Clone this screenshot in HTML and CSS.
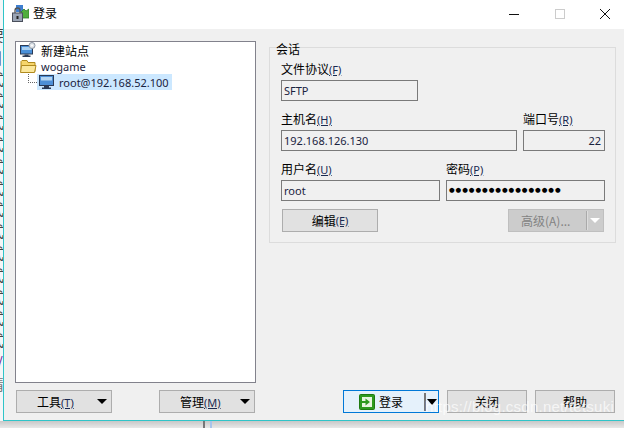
FILE: index.html
```html
<!DOCTYPE html>
<html lang="zh">
<head>
<meta charset="utf-8">
<title>登录</title>
<link rel="stylesheet" href="styles.css">
</head>
<body>
<div class="desktop">
  <div class="behind" aria-hidden="true">
    <span>要</span><span class="bracket">]</span><span>式</span><span>式</span><span>式</span><span>式</span><span>式</span><span>式</span><span>式</span><span>式</span><span>式</span><span>式</span><span>式</span><span>式</span><span>式</span><span class="purple">/</span><span class="grey">请</span>
  </div>
  <div class="window">
    <header class="titlebar">
      <svg class="app-icon" width="17" height="17" viewBox="0 0 17 17">
        <rect x="4" y="0" width="7" height="7" fill="#3f7fd0"/>
        <path d="M9 7l3-3 2 2 3-2v9H9z" fill="#4fae3c" stroke="#2e7d24" stroke-width=".8"/>
        <path d="M3 8V5.500a2.500 2.500 0 0 1 5 0V8" fill="none" stroke="#555" stroke-width="1.300"/>
        <rect x=".5" y="8" width="10" height="8.500" fill="#9aa4b4" stroke="#4a4f5c"/>
        <rect x="4.500" y="11" width="2" height="3" fill="#222"/>
      </svg>
      <span class="title">登录</span>
      <div class="controls">
        <span class="ctl"><svg width="12" height="12" viewBox="0 0 12 12"><path d="M1 6.500h10" stroke="#111"/></svg></span>
        <span class="ctl"><svg width="12" height="12" viewBox="0 0 12 12"><rect x="1.500" y="1.500" width="9" height="9" fill="none" stroke="#ccc"/></svg></span>
        <span class="ctl"><svg width="12" height="12" viewBox="0 0 12 12"><path d="M1 1l10 10M11 1L1 11" stroke="#111" fill="none"/></svg></span>
      </div>
    </header>
    <main class="content">
      <section class="left">
        <div class="tree">
          <div class="node">
            <svg width="18" height="16" viewBox="0 0 18 16">
              <rect x=".5" y="3.500" width="12" height="8.500" fill="#4a90d9" stroke="#2b3a55"/>
              <path d="M2 5h9.500v3H2z" fill="#a9d0f2"/>
              <path d="M4.500 12.500h4v1h2V15h-8v-1.500h2z" fill="#2b3a55"/>
              <circle cx="12" cy="3.500" r="3" fill="#dfe3e8" stroke="#8c96a3"/>
              <circle cx="12" cy="3.500" r="1" fill="#fff"/>
            </svg>
            <span class="cjk">新建站点</span>
          </div>
          <div class="node">
            <svg width="18" height="15" viewBox="0 0 18 15">
              <path d="M1 12.500v-10l1-1h5l1 2h7v9z" fill="#f6d56b" stroke="#b08a1e"/>
              <path d="M.5 13.500l1-7h14.500l-1.500 7z" fill="#fbe79b" stroke="#b08a1e"/>
            </svg>
            <span class="latin">wogame</span>
          </div>
          <div class="node child">
            <span class="dots"></span>
            <div class="selected">
              <svg width="16" height="15" viewBox="0 0 16 15">
                <rect x=".5" y=".5" width="14" height="10" fill="#4d8fd6" stroke="#2b3a55"/>
                <path d="M2 2h11v3.500H2z" fill="#b5d6f3"/>
                <path d="M5 11h5v1.500h2V14H3v-1.500h2z" fill="#2b3a55"/>
              </svg>
              <span class="latin">root@192.168.52.100</span>
            </div>
          </div>
        </div>
        <div class="left-actions">
          <button class="btn split"><span class="lbl">工具<u>(T)</u></span><i class="arrow"></i></button>
          <button class="btn split"><span class="lbl">管理<u>(M)</u></span><i class="arrow"></i></button>
        </div>
      </section>
      <section class="right">
        <fieldset class="session">
          <legend>会话</legend>
          <div class="field protocol">
            <label>文件协议<u>(F)</u></label>
            <div class="input">SFTP</div>
          </div>
          <div class="row host-row">
            <div class="field grow">
              <label>主机名<u>(H)</u></label>
              <div class="input">192.168.126.130</div>
            </div>
            <div class="field port">
              <label>端口号<u>(R)</u></label>
              <div class="input end">22</div>
            </div>
          </div>
          <div class="row user-row">
            <div class="field half">
              <label>用户名<u>(U)</u></label>
              <div class="input">root</div>
            </div>
            <div class="field half">
              <label>密码<u>(P)</u></label>
              <div class="input dots-text">●●●●●●●●●●●●●●●●●</div>
            </div>
          </div>
          <div class="row session-actions">
            <button class="btn">编辑<u>(E)</u></button>
            <button class="btn disabled"><span class="lbl">高级(A)...</span><span class="sep"></span><i class="arrow light"></i></button>
          </div>
        </fieldset>
        <div class="dialog-actions">
          <button class="btn primary">
            <span class="lbl">
              <svg width="16" height="16" viewBox="0 0 16 16">
                <rect x=".5" y=".5" width="15" height="15" rx="1" fill="#2f9a1e" stroke="#1e7a12"/>
                <rect x="3" y="3" width="10" height="10" fill="#e8f5e0"/>
                <path d="M3 7h3.500V4.500L11 8l-4.500 3.500V9H3z" fill="#2f9a1e"/>
              </svg>
              登录
            </span>
            <span class="sep dark"></span><i class="arrow big"></i>
          </button>
          <button class="btn small">关闭</button>
          <button class="btn small">帮助</button>
        </div>
      </section>
    </main>
  </div>
</div>
<div class="below"><i></i><i></i></div>
<div class="watermark">https://blog.csdn.net/tetsuki</div>
</body>
</html>
```

FILE: styles.css
```css
* { box-sizing: border-box; }
html, body { margin: 0; height: 100%; overflow: hidden; }
body {
  position: relative;
  width: 624px;
  height: 428px;
  background: #e8e8e8;
  font: 12px "Noto Sans CJK SC", "Noto Sans", sans-serif;
  color: #000;
}
u { text-decoration: underline; font-family: "Noto Sans", sans-serif; font-size: 11px; color: #1a2a50; }

.desktop { display: flex; height: 421px; }
.behind {
  width: 3px;
  flex: none;
  overflow: hidden;
  background: #f4f6f8;
  padding-top: 24px;
  display: flex;
  flex-direction: column;
  font-size: 15px;
  line-height: 21.800px;
  color: #444;
}
.behind span { display: block; margin-left: -11px; white-space: nowrap; }
.behind .bracket { margin-left: -3px; }
.behind .purple { color: #6a1b9a; margin-left: -3px; }
.behind .grey { color: #777; }

.window {
  flex: 1;
  display: flex;
  flex-direction: column;
  border-left: 1px solid #2fc4c8;
  border-bottom: 1px solid #2fc4c8;
  background: #f0f0f0;
  min-width: 0;
}
.titlebar {
  height: 29px;
  flex: none;
  background: #fff;
  display: flex;
  align-items: center;
  padding: 0 0 2px 8px;
}
.app-icon { margin-right: 4px; }
.title { font-size: 12px; margin-top: -3px; }
.controls { margin-left: auto; display: flex; gap: 7.500px; }
.ctl { width: 38px; display: flex; justify-content: center; }

.content { flex: 1; display: flex; min-height: 0; padding: 12px 8px 7px 11px; }
.left { width: 241px; flex: none; display: flex; flex-direction: column; }
.tree {
  height: 342px;
  background: #fff;
  border: 1px solid #82828c;
  padding: 0 0 0 4px;
}
.node { display: flex; align-items: center; height: 16px; gap: 3px; }
.latin { font-family: "Noto Sans", sans-serif; font-size: 11px; color: #1a2340; }
.child { padding-left: 8px; gap: 0; }
.dots { width: 9px; height: 9px; border-left: 1px dotted #666; border-bottom: 1px dotted #666; margin-top: -8px; }
.selected {
  flex: 1;
  display: flex;
  align-items: center;
  gap: 4px;
  height: 16px;
  background: #cce8ff;
  padding-left: 2px;
  margin-right: 83px;
}
.left-actions { display: flex; justify-content: space-between; margin-top: 7px; padding: 0 1px; }

.btn {
  width: 96px;
  height: 23px;
  padding: 0;
  border: 1px solid #adadad;
  background: #e1e1e1;
  font: inherit;
  color: #000;
  display: flex;
  align-items: center;
  justify-content: center;
}
.btn.split { justify-content: flex-start; }
.btn.split .lbl { margin-left: 20px; }
.btn.split .arrow { margin-left: auto; margin-right: 4px; }
.arrow { width: 0; height: 0; border-left: 5px solid transparent; border-right: 5px solid transparent; border-top: 5px solid #000; }
.arrow.big { border-left-width: 5.500px; border-right-width: 5.500px; border-top-width: 6px; }

.right { flex: 1; display: flex; flex-direction: column; margin-left: 13px; min-width: 0; }
.session {
  margin: -2px 0 0;
  height: 204px;
  border: 1px solid #dcdcdc;
  padding: 8px 10px 0 11px;
  min-width: 0;
}
.session legend { padding: 3px 0 0; margin-left: -5px; font-size: 12px; line-height: 14px; }
.field label { display: block; height: 16px; line-height: 10px; font-size: 12px; white-space: nowrap; }
.input {
  height: 21px;
  border: 1px solid #7a7a7a;
  background: #f0f0f0;
  font-family: "Noto Sans", sans-serif;
  font-size: 11px;
  line-height: 19px;
  padding: 0 2px;
  color: #1a2340;
}
.input.end { text-align: right; padding-right: 3px; }
.input.dots-text { font-family: "DejaVu Sans", sans-serif; font-size: 6.500px; letter-spacing: .95px; color: #000; }
.protocol { width: 137px; }
.row { display: flex; gap: 6px; }
.grow { flex: 1; }
.port { width: 82px; }
.half { flex: 1; }
.host-row { margin-top: 13px; }
.user-row { margin-top: 13px; }
.session-actions { margin-top: 8px; justify-content: space-between; padding: 0 1px; }
.disabled { background: #ccc; border-color: #bfbfbf; color: #838383; }
.disabled .lbl { margin-left: 12px; }
.sep { width: 1px; height: 19px; background: #aaa; margin-left: auto; margin-right: 3px; box-shadow: 1px 0 0 #ddd; }
.arrow.light { border-top-color: #fff; margin-right: 3px; }

.dialog-actions { margin-top: auto; display: flex; gap: 8px; margin-left: 74px; }
.primary { background: #e5f1fb; border: 1px solid #0078d7; padding-right: 1px; }
.primary .lbl { display: flex; align-items: center; gap: 4px; margin-left: 15px; }
.primary .sep.dark { background: #777; box-shadow: none; width: 2px; height: 18px; margin-right: 1px; }
.small { width: 80px; }

.below {
  height: 7px;
  background: linear-gradient(#c8c8c8, #e8e8e8);
  display: flex;
  gap: 5px;
  padding-left: 203px;
}
.below i { width: 2px; height: 7px; background: #777; }
.below i:last-child { background: #a9c4ea; }

.watermark {
  position: absolute;
  left: 425px;
  top: 398px;
  font: 15px "Liberation Sans", sans-serif;
  letter-spacing: .25px;
  color: rgba(255, 255, 255, .7);
  white-space: nowrap;
}
```
